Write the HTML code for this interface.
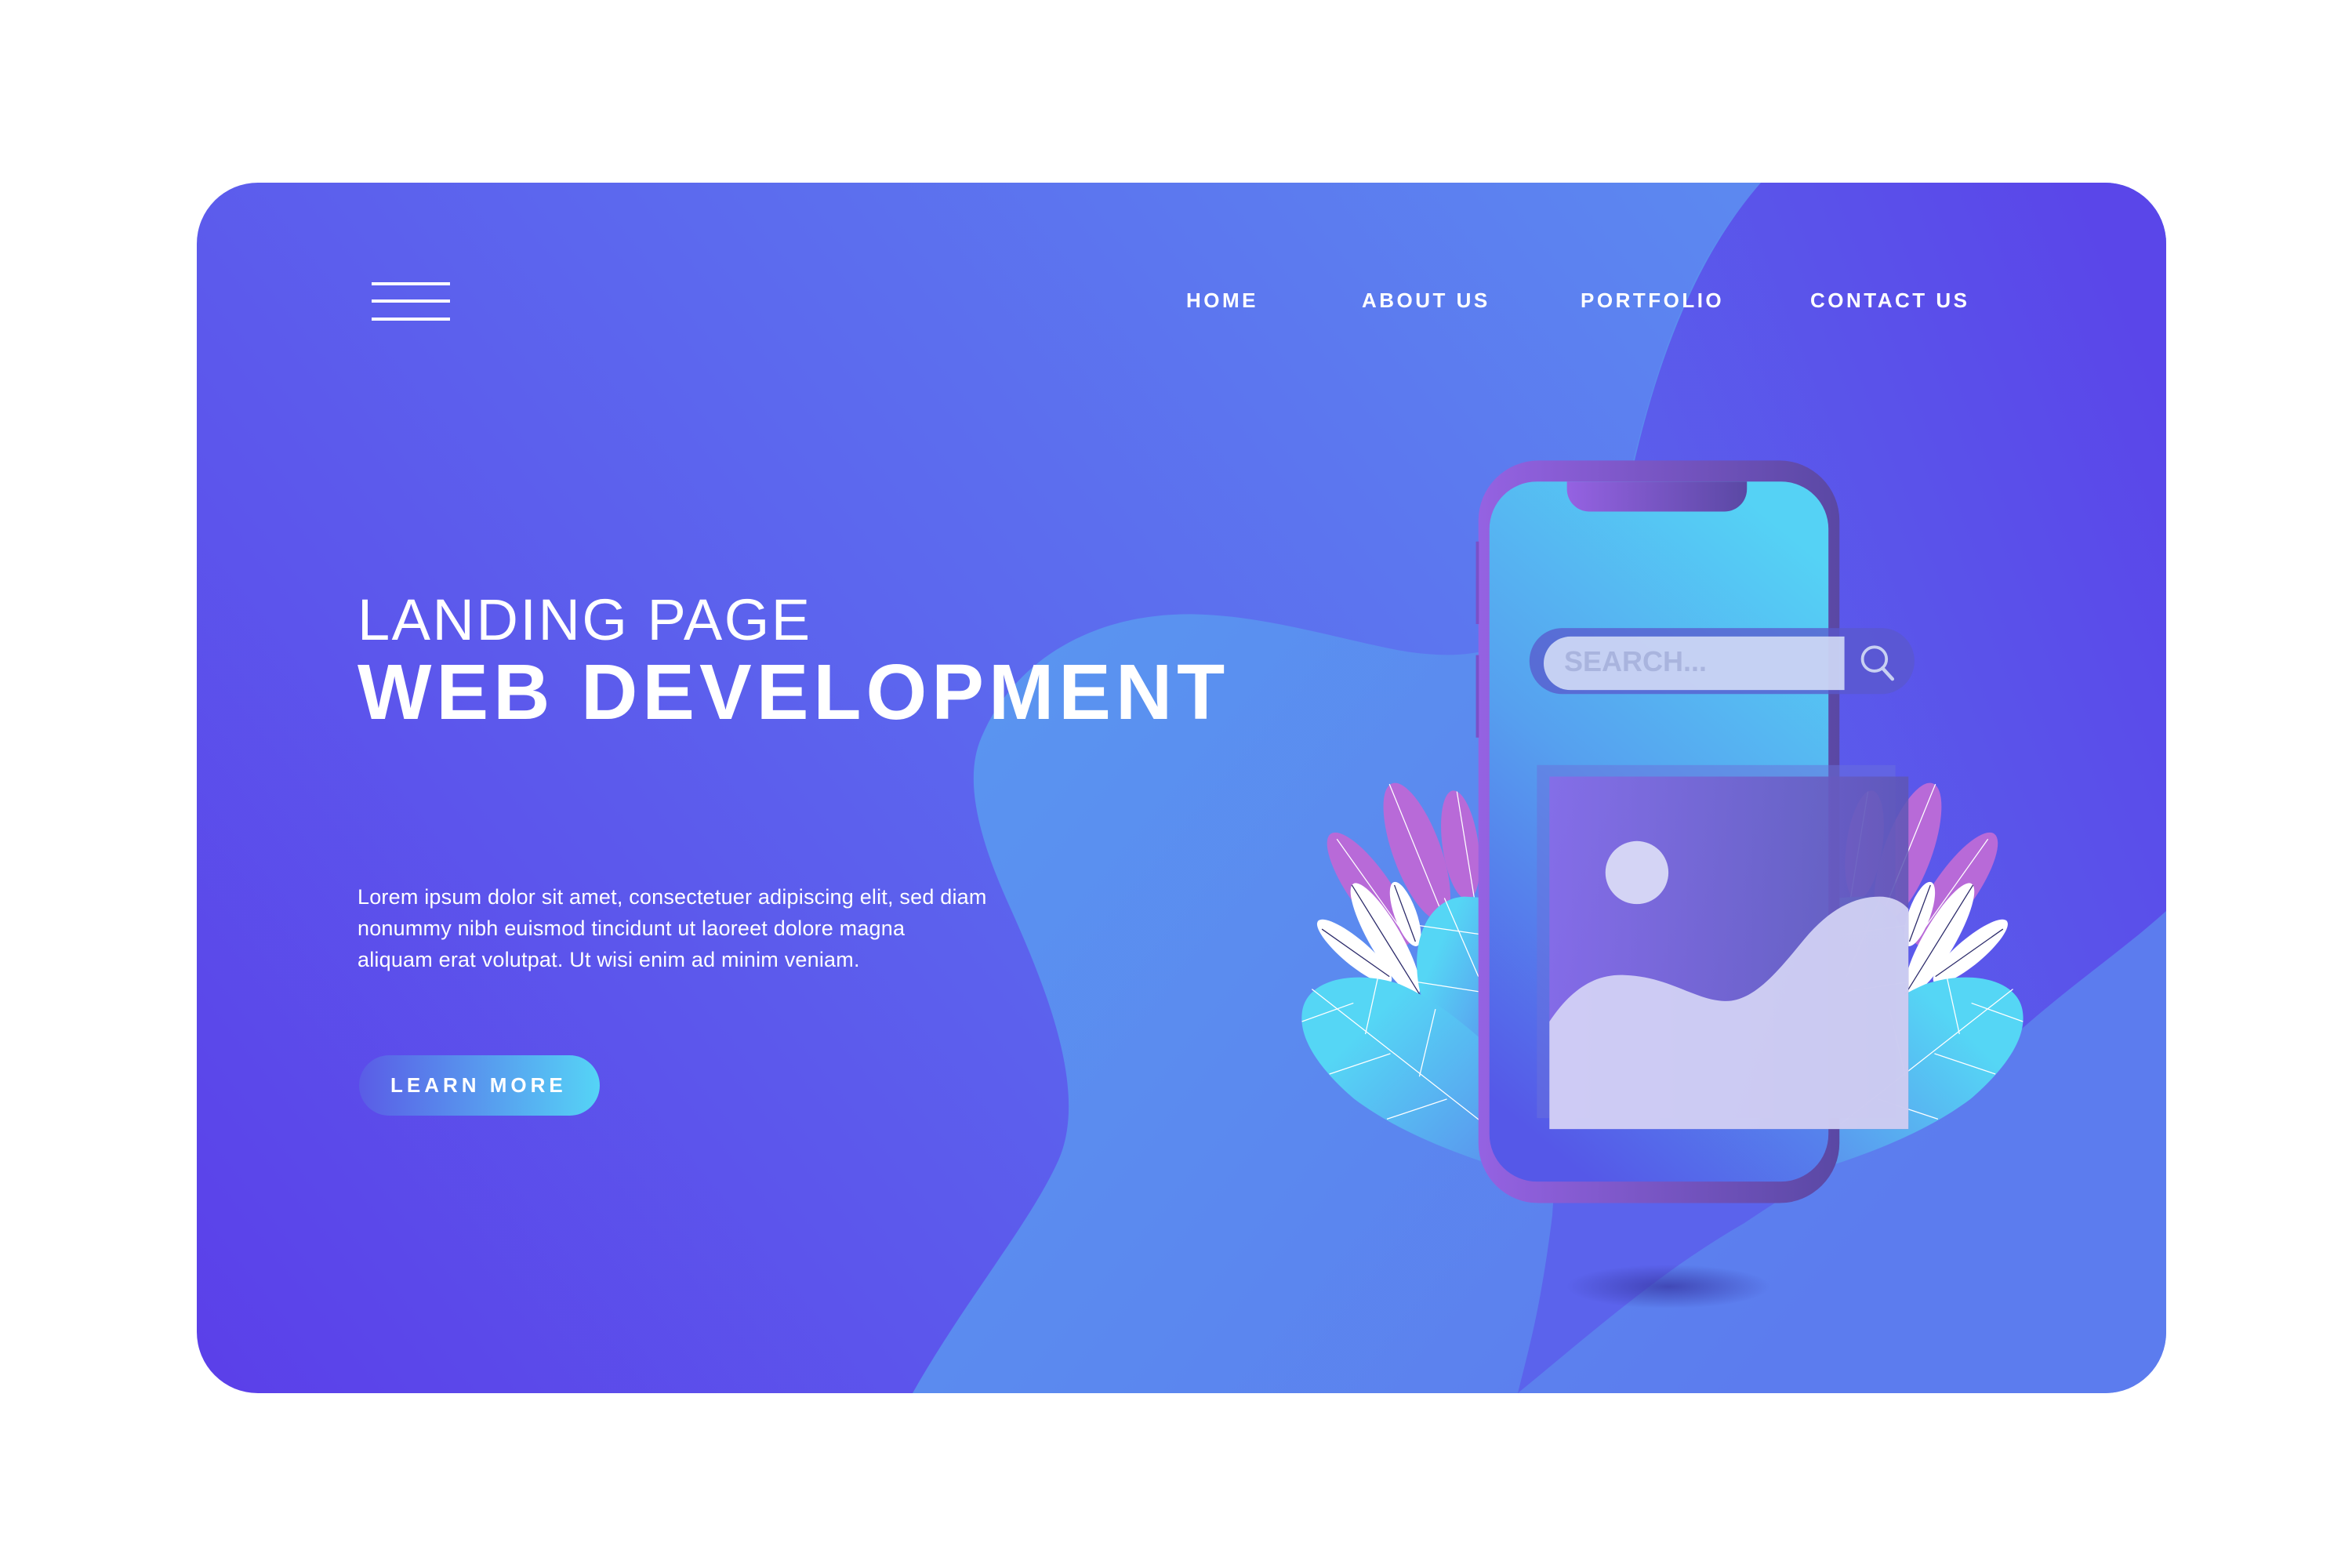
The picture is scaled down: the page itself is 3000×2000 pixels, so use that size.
<!DOCTYPE html>
<html><head><meta charset="utf-8"><style>
html,body{margin:0;padding:0;background:#fff;width:3000px;height:2000px;overflow:hidden;font-family:"Liberation Sans",sans-serif}
.t{position:absolute;color:#fff;white-space:nowrap}
.nav{font-weight:bold;font-size:26px;letter-spacing:3.5px;top:368px}
</style></head><body>
<svg width="3000" height="2000" viewBox="0 0 3000 2000" style="position:absolute;left:0;top:0">
<defs>
<clipPath id="card"><rect x="251" y="233" width="2512" height="1544" rx="78"/></clipPath>
<linearGradient id="bg" x1="251" y1="1777" x2="2200" y2="233" gradientUnits="userSpaceOnUse"><stop offset="0" stop-color="#5b3fe9"/><stop offset="0.55" stop-color="#5c68ee"/><stop offset="1" stop-color="#5c88f0"/></linearGradient>
<linearGradient id="blob" x1="1200" y1="800" x2="2300" y2="1700" gradientUnits="userSpaceOnUse"><stop offset="0" stop-color="#5a96f0"/><stop offset="1" stop-color="#5c7cee"/></linearGradient>
<linearGradient id="purp" x1="2000" y1="800" x2="2763" y2="500" gradientUnits="userSpaceOnUse"><stop offset="0" stop-color="#5b63ec"/><stop offset="1" stop-color="#5a46e9"/></linearGradient>
<linearGradient id="frame" x1="0" x2="1" y1="0" y2="0"><stop offset="0" stop-color="#9562e2"/><stop offset="1" stop-color="#5a48a4"/></linearGradient>
<linearGradient id="scr" x1="0.7" y1="0" x2="0.3" y2="1"><stop offset="0" stop-color="#55d2f5"/><stop offset="0.5" stop-color="#56a0ef"/><stop offset="1" stop-color="#5558e8"/></linearGradient>
<linearGradient id="img" x1="0" x2="1"><stop offset="0" stop-color="#8a6ae8"/><stop offset="1" stop-color="#5e56b4"/></linearGradient>
<linearGradient id="leaf" x1="0.3" y1="0.3" x2="1" y2="1"><stop offset="0" stop-color="#55d6f5"/><stop offset="1" stop-color="#5a96ee"/></linearGradient>
<linearGradient id="btn" x1="0" x2="1"><stop offset="0" stop-color="#5a5ce6"/><stop offset="1" stop-color="#55d4f6"/></linearGradient>
<radialGradient id="sh"><stop offset="0" stop-color="#3a3aa8" stop-opacity="0.8"/><stop offset="1" stop-color="#3a3aa8" stop-opacity="0"/></radialGradient>
<g id="cluster">
<ellipse cx="230" cy="900" rx="42" ry="135" transform="rotate(-35 230 900)" fill="#b86ad8"/>
<ellipse cx="325" cy="825" rx="48" ry="145" transform="rotate(-20 325 825)" fill="#b86ad8"/>
<ellipse cx="412" cy="812" rx="36" ry="110" transform="rotate(-8 412 812)" fill="#b86ad8"/>
<path d="M165,800 L300,990 M270,690 L390,985 M405,705 L440,920" stroke="#fff" stroke-width="2" fill="none"/>
<ellipse cx="200" cy="1025" rx="26" ry="95" transform="rotate(-50 200 1025)" fill="#fff"/>
<ellipse cx="262" cy="1000" rx="32" ry="128" transform="rotate(-30 262 1000)" fill="#fff"/>
<ellipse cx="302" cy="950" rx="22" ry="68" transform="rotate(-20 302 950)" fill="#fff"/>
<path d="M135,980 L270,1075 M195,892 L330,1110 M280,892 L322,1005" stroke="#2b2a6a" stroke-width="2" fill="none"/>
<path d="M330,1100 C310,1000 350,918 420,915 L470,918 L470,1250 C400,1180 340,1150 330,1100Z" fill="url(#leaf)"/>
<path d="M95,1150 C100,1080 200,1060 290,1090 C360,1120 420,1170 470,1215 L470,1450 C380,1420 280,1380 200,1320 C130,1260 90,1200 95,1150Z" fill="url(#leaf)"/>
<path d="M115,1100 L460,1370 M95,1165 L198,1128 M150,1270 L272,1229 M265,1360 L385,1320 M222,1190 L248,1072 M330,1275 L362,1140 M330,973 L448,990 M320,1085 L448,1105 M380,918 L448,1075" stroke="#fff" stroke-width="2" fill="none"/>
</g>
</defs>
<g clip-path="url(#card)">
<rect x="251" y="233" width="2512" height="1544" fill="url(#bg)"/>
<path d="M1164,1777 C1230,1660 1314,1560 1350,1480 C1390,1390 1330,1250 1285,1150 C1245,1060 1230,990 1252,940 C1290,850 1380,790 1496,784 C1600,778 1720,820 1800,832 C1900,845 2000,830 2080,600 C2120,440 2160,330 2246,233 L2763,233 L2763,1777Z" fill="url(#blob)"/>
<path d="M2246,233 C2170,320 2120,440 2086,583 C2060,700 2040,800 2020,900 C2000,1100 1990,1400 1980,1550 C1965,1670 1950,1720 1936,1777 C2030,1700 2120,1620 2225,1560 C2360,1470 2480,1400 2578,1313 C2650,1250 2710,1210 2763,1162 L2763,233Z" fill="url(#purp)"/>
<ellipse cx="2128" cy="1641" rx="130" ry="28" fill="url(#sh)"/>
</g>
<g stroke="#fff" stroke-width="4"><line x1="474" y1="362" x2="574" y2="362"/><line x1="474" y1="384" x2="574" y2="384"/><line x1="474" y1="407" x2="574" y2="407"/></g>
<rect x="458" y="1346" width="307" height="77" rx="38.5" fill="url(#btn)"/>
<g transform="translate(1600,560) scale(0.6378)">
<use href="#cluster"/>
<use href="#cluster" transform="translate(1632,0) scale(-1,1)"/>
<rect x="448" y="43" width="722" height="1485" rx="120" fill="url(#frame)"/>
<rect x="443" y="205" width="6" height="165" fill="#7a50c8"/>
<rect x="443" y="432" width="6" height="165" fill="#7a50c8"/>
<rect x="470" y="85" width="678" height="1400" rx="95" fill="url(#scr)"/>
<path d="M625,85 L985,85 L985,100 C985,125 965,145 940,145 L670,145 C645,145 625,125 625,100Z" fill="url(#frame)"/>
<rect x="550" y="378" width="770" height="132" rx="66" fill="#5a58cc" fill-opacity="0.75"/>
<path d="M632,395 L1180,395 L1180,502 L632,502 A53.5,53.5 0 0 1 632,395Z" fill="#d8e2f8" fill-opacity="0.85"/>
<circle cx="1240" cy="440" r="24" fill="none" stroke="#c8d0f2" stroke-width="6"/>
<line x1="1256" y1="458" x2="1276" y2="480" stroke="#c8d0f2" stroke-width="7" stroke-linecap="round"/>
<rect x="565" y="652" width="717" height="706" fill="#6a70dc" fill-opacity="0.5"/>
<rect x="590" y="675" width="718" height="705" fill="url(#img)" fill-opacity="0.85"/>
<circle cx="765" cy="867" r="63" fill="#d4d4f5"/>
<path d="M590,1165 C640,1090 690,1070 740,1072 C830,1075 880,1122 940,1124 C1000,1126 1050,1060 1100,1000 C1150,940 1200,915 1250,915 C1280,915 1300,930 1308,940 L1308,1380 L590,1380Z" fill="#d6d6f6" fill-opacity="0.9"/>
</g>
</svg>
<div class="t" style="left:1995px;top:823px;font-size:36px;font-weight:bold;color:#a9b4de">SEARCH...</div>
<div class="t nav" style="left:1513px">HOME</div>
<div class="t nav" style="left:1737px">ABOUT US</div>
<div class="t nav" style="left:2016px">PORTFOLIO</div>
<div class="t nav" style="left:2309px">CONTACT US</div>
<div class="t" style="left:456px;top:748px;font-size:74px;letter-spacing:2.5px;font-weight:300">LANDING PAGE</div>
<div class="t" style="left:456px;top:826px;font-size:100px;font-weight:bold;letter-spacing:6px">WEB DEVELOPMENT</div>
<div class="t" style="left:456px;top:1124px;font-size:27px;line-height:40px;letter-spacing:0.2px">Lorem ipsum dolor sit amet, consectetuer adipiscing elit, sed diam<br>nonummy nibh euismod tincidunt ut laoreet dolore magna<br>aliquam erat volutpat. Ut wisi enim ad minim veniam.</div>
<div class="t" style="left:498px;top:1369px;font-size:26px;font-weight:bold;letter-spacing:5px">LEARN MORE</div>
</body></html>
